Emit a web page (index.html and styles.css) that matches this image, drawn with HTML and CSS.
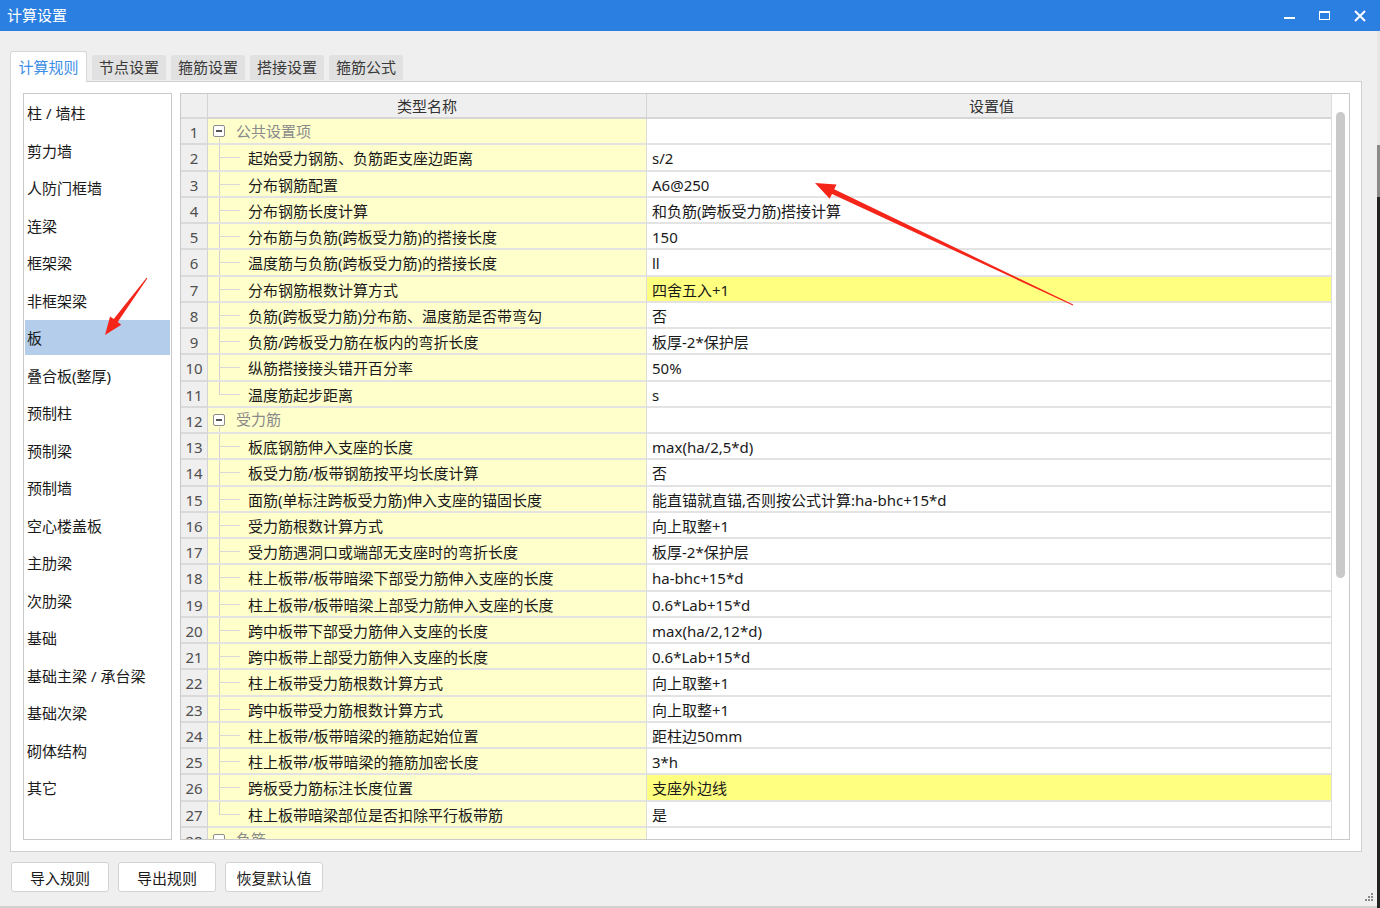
FILE: index.html
```html
<!DOCTYPE html>
<html lang="zh-CN">
<head>
<meta charset="utf-8">
<title>计算设置</title>
<link rel="stylesheet" href="styles.css">
</head>
<body>
<div class="titlebar">
  <div class="title">计算设置</div>
  <div class="winctl">
    <span class="ctl"><svg width="12" height="12" viewBox="0 0 12 12"><rect x="0" y="7" width="11" height="2" fill="#fff"/></svg></span>
    <span class="ctl"><svg width="12" height="12" viewBox="0 0 12 12"><rect x="0.5" y="1.5" width="10" height="8" fill="none" stroke="#fff" stroke-width="1"/><rect x="0" y="1" width="11" height="2" fill="#fff"/></svg></span>
    <span class="ctl"><svg width="12" height="12" viewBox="0 0 12 12"><path d="M1 1 L11 11 M11 1 L1 11" stroke="#fff" stroke-width="2"/></svg></span>
  </div>
</div>
<div class="main">
  <div class="window">
    <div class="tabs">
      <div class="tab active">计算规则</div>
      <div class="tab">节点设置</div>
      <div class="tab">箍筋设置</div>
      <div class="tab">搭接设置</div>
      <div class="tab">箍筋公式</div>
    </div>
    <div class="panel">
      <div class="list">
        <div class="item">柱 / 墙柱</div>
        <div class="item">剪力墙</div>
        <div class="item">人防门框墙</div>
        <div class="item">连梁</div>
        <div class="item">框架梁</div>
        <div class="item">非框架梁</div>
        <div class="item selected">板</div>
        <div class="item">叠合板(整厚)</div>
        <div class="item">预制柱</div>
        <div class="item">预制梁</div>
        <div class="item">预制墙</div>
        <div class="item">空心楼盖板</div>
        <div class="item">主肋梁</div>
        <div class="item">次肋梁</div>
        <div class="item">基础</div>
        <div class="item">基础主梁 / 承台梁</div>
        <div class="item">基础次梁</div>
        <div class="item">砌体结构</div>
        <div class="item">其它</div>
      </div>
      <div class="table">
        <div class="grid">
          <div class="row head">
            <div class="num"></div>
            <div class="name">类型名称</div>
            <div class="val">设置值</div>
          </div>
          <div class="row"><div class="num">1</div><div class="name group"><span class="box"></span><span class="gtext">公共设置项</span></div><div class="val"></div></div>
          <div class="row"><div class="num">2</div><div class="name child">起始受力钢筋、负筋距支座边距离</div><div class="val">s/2</div></div>
          <div class="row"><div class="num">3</div><div class="name child">分布钢筋配置</div><div class="val">A6@250</div></div>
          <div class="row"><div class="num">4</div><div class="name child">分布钢筋长度计算</div><div class="val">和负筋(跨板受力筋)搭接计算</div></div>
          <div class="row"><div class="num">5</div><div class="name child">分布筋与负筋(跨板受力筋)的搭接长度</div><div class="val">150</div></div>
          <div class="row"><div class="num">6</div><div class="name child">温度筋与负筋(跨板受力筋)的搭接长度</div><div class="val">ll</div></div>
          <div class="row"><div class="num">7</div><div class="name child">分布钢筋根数计算方式</div><div class="val hl">四舍五入+1</div></div>
          <div class="row"><div class="num">8</div><div class="name child">负筋(跨板受力筋)分布筋、温度筋是否带弯勾</div><div class="val">否</div></div>
          <div class="row"><div class="num">9</div><div class="name child">负筋/跨板受力筋在板内的弯折长度</div><div class="val">板厚-2*保护层</div></div>
          <div class="row"><div class="num">10</div><div class="name child">纵筋搭接接头错开百分率</div><div class="val">50%</div></div>
          <div class="row"><div class="num">11</div><div class="name child last">温度筋起步距离</div><div class="val">s</div></div>
          <div class="row"><div class="num">12</div><div class="name group"><span class="box"></span><span class="gtext">受力筋</span></div><div class="val"></div></div>
          <div class="row"><div class="num">13</div><div class="name child">板底钢筋伸入支座的长度</div><div class="val">max(ha/2,5*d)</div></div>
          <div class="row"><div class="num">14</div><div class="name child">板受力筋/板带钢筋按平均长度计算</div><div class="val">否</div></div>
          <div class="row"><div class="num">15</div><div class="name child">面筋(单标注跨板受力筋)伸入支座的锚固长度</div><div class="val">能直锚就直锚,否则按公式计算:ha-bhc+15*d</div></div>
          <div class="row"><div class="num">16</div><div class="name child">受力筋根数计算方式</div><div class="val">向上取整+1</div></div>
          <div class="row"><div class="num">17</div><div class="name child">受力筋遇洞口或端部无支座时的弯折长度</div><div class="val">板厚-2*保护层</div></div>
          <div class="row"><div class="num">18</div><div class="name child">柱上板带/板带暗梁下部受力筋伸入支座的长度</div><div class="val">ha-bhc+15*d</div></div>
          <div class="row"><div class="num">19</div><div class="name child">柱上板带/板带暗梁上部受力筋伸入支座的长度</div><div class="val">0.6*Lab+15*d</div></div>
          <div class="row"><div class="num">20</div><div class="name child">跨中板带下部受力筋伸入支座的长度</div><div class="val">max(ha/2,12*d)</div></div>
          <div class="row"><div class="num">21</div><div class="name child">跨中板带上部受力筋伸入支座的长度</div><div class="val">0.6*Lab+15*d</div></div>
          <div class="row"><div class="num">22</div><div class="name child">柱上板带受力筋根数计算方式</div><div class="val">向上取整+1</div></div>
          <div class="row"><div class="num">23</div><div class="name child">跨中板带受力筋根数计算方式</div><div class="val">向上取整+1</div></div>
          <div class="row"><div class="num">24</div><div class="name child">柱上板带/板带暗梁的箍筋起始位置</div><div class="val">距柱边50mm</div></div>
          <div class="row"><div class="num">25</div><div class="name child">柱上板带/板带暗梁的箍筋加密长度</div><div class="val">3*h</div></div>
          <div class="row"><div class="num">26</div><div class="name child">跨板受力筋标注长度位置</div><div class="val hl">支座外边线</div></div>
          <div class="row"><div class="num">27</div><div class="name child last">柱上板带暗梁部位是否扣除平行板带筋</div><div class="val">是</div></div>
          <div class="row"><div class="num">28</div><div class="name group"><span class="box"></span><span class="gtext">负筋</span></div><div class="val"></div></div>
        </div>
        <div class="vscroll"><div class="thumb"></div></div>
      </div>
    </div>
    <div class="buttons">
      <button class="btn">导入规则</button>
      <button class="btn">导出规则</button>
      <button class="btn">恢复默认值</button>
    </div>
  </div>
  <div class="edge"></div>
</div>
<svg class="grip" width="10" height="10" viewBox="0 0 10 10">
  <rect x="7" y="1" width="2" height="2" fill="#8a8a8a"/>
  <rect x="4" y="4" width="2" height="2" fill="#8a8a8a"/>
  <rect x="7" y="4" width="2" height="2" fill="#8a8a8a"/>
  <rect x="1" y="7" width="2" height="2" fill="#8a8a8a"/>
  <rect x="4" y="7" width="2" height="2" fill="#8a8a8a"/>
  <rect x="7" y="7" width="2" height="2" fill="#8a8a8a"/>
</svg>
<svg class="annot" width="1380" height="908" viewBox="0 0 1380 908">
  <polygon fill="#f5251a" points="1073.2,304.5 834.2,189.3 836.5,184.4 815,183 829.7,198.8 832.0,193.9 1072.8,305.5"/>
  <polygon fill="#f5251a" points="147.4,278.3 117.7,322.0 121.3,324.7 105,335 110.1,316.4 113.7,319.0 146.6,277.7"/>
</svg>
</body>
</html>
```
FILE: styles.css
```css
* { box-sizing: border-box; }
html, body { margin: 0; padding: 0; }
body {
  width: 1380px;
  height: 908px;
  overflow: hidden;
  position: relative;
  background: #f0f0f0;
  font-family: "Noto Sans", "Noto Sans CJK SC", sans-serif;
  font-size: 15px;
  color: #1a1a1a;
}
.titlebar {
  height: 31px;
  background: #2b7fe0;
  display: flex;
  align-items: center;
  padding-left: 7px;
  color: #fff;
}
.title { flex: 1; font-size: 15px; line-height: 31px; }
.winctl { display: flex; padding-right: 3px; height: 31px; }
.ctl { width: 35px; display: flex; align-items: center; justify-content: center; }

.main { display: flex; height: 877px; }
.window {
  width: 1377px;
  height: 877px;
  padding: 20px 0 0 10px;
  border-bottom: 2px solid #d2d2d2;
  background: #efefef;
}
.edge {
  width: 3px;
  background: linear-gradient(#e6e6e6 0 114px, #8a8a8a 114px 166px, #222 166px);
}

.tabs { display: flex; align-items: flex-end; height: 30px; gap: 5px; }
.tab {
  width: 74px;
  height: 25px;
  margin-bottom: 1px;
  background: #e1e1e1;
  border-radius: 3px 3px 0 0;
  color: #3a3a3a;
  text-align: center;
  line-height: 25px;
}
.tab.active {
  width: 77px;
  height: 31px;
  margin-bottom: -1px;
  background: #fff;
  border: 1px solid #d6d6d6;
  border-bottom: none;
  color: #3d8ee6;
  line-height: 30px;
  position: relative;
  z-index: 1;
}

.panel {
  width: 1352px;
  height: 771px;
  background: #fff;
  border: 1px solid #cfcfcf;
  padding: 11px 11px 11px 12px;
  display: flex;
  gap: 8px;
}
.list {
  width: 149px;
  height: 747px;
  border: 1px solid #c9c9c9;
  padding: 1px;
}
.item {
  height: 35px;
  margin-bottom: 2.5px;
  line-height: 37px;
  padding-left: 2px;
  color: #1a1a1a;
  white-space: nowrap;
  overflow: hidden;
}
.item.selected { background: #b3cdea; }

.table {
  width: 1170px;
  height: 747px;
  border: 1px solid #c9c9c9;
  display: flex;
  overflow: hidden;
}
.grid { width: 1150px; overflow: hidden; }
.row {
  display: grid;
  grid-template-columns: 27px 439px 684px;
  height: 26.25px;
}
.row > div {
  border-bottom: 2px solid #e3e3e3;
  line-height: 27px;
  white-space: nowrap;
  overflow: hidden;
}
.num {
  background: #efefef;
  border-right: 1px solid #d4d4d4;
  text-align: center;
  color: #505050;
  border-bottom-color: #dadada !important;
}
.name {
  background: #ffffcc;
  border-right: 1px solid #dcdcdc;
  position: relative;
  color: #1a1a1a;
}
.val { background: #fff; padding-left: 5px; color: #1a1a1a; }
.val.hl { background: #ffff80; }

.row.head { height: 25px; }
.row.head > div {
  background: #efefef;
  border-bottom: 2px solid #d6d6d6;
  text-align: center;
  line-height: 25px;
  color: #333;
}
.row.head .name { border-right: 1px solid #d4d4d4; }

.name.child { padding-left: 40px; }
.name.child::before {
  content: "";
  position: absolute;
  left: 11px;
  top: 0;
  bottom: 0;
  border-left: 1px solid #d2d2d2;
}
.name.child.last::before { bottom: 50%; }
.name.child::after {
  content: "";
  position: absolute;
  left: 11px;
  width: 21px;
  top: 50%;
  border-top: 1px solid #d8d8d8;
}
.name.group { padding-left: 5px; display: flex; align-items: center; }
.name.group::before {
  content: "";
  position: absolute;
  left: 11px;
  top: 19px;
  bottom: 0;
  border-left: 1px solid #d2d2d2;
}
.box {
  width: 12px;
  height: 12px;
  border: 1px solid #8c8c8c;
  border-radius: 2px;
  background: #fff;
  position: relative;
  flex: none;
}
.box::after {
  content: "";
  position: absolute;
  left: 2px;
  right: 2px;
  top: 4px;
  height: 2px;
  background: #555;
}
.gtext { margin-left: 11px; color: #8a8a8a; }

.vscroll {
  width: 18px;
  border-left: 1px solid #dcdcdc;
  background: #fff;
  padding: 18px 0 0 4px;
}
.thumb {
  width: 9px;
  height: 466px;
  background: #c9c9c9;
  border-radius: 5px;
}

.buttons { display: flex; gap: 9px; margin: 10px 0 0 1px; }
.btn {
  width: 98px;
  height: 30px;
  background: #fff;
  border: 1px solid #d3d3d3;
  border-radius: 3px;
  font-family: "Noto Sans", "Noto Sans CJK SC", sans-serif;
  font-size: 15px;
  color: #1a1a1a;
  padding: 0;
}

.grip { position: absolute; left: 1364px; top: 892px; }
.annot { position: absolute; left: 0; top: 0; pointer-events: none; }
```
